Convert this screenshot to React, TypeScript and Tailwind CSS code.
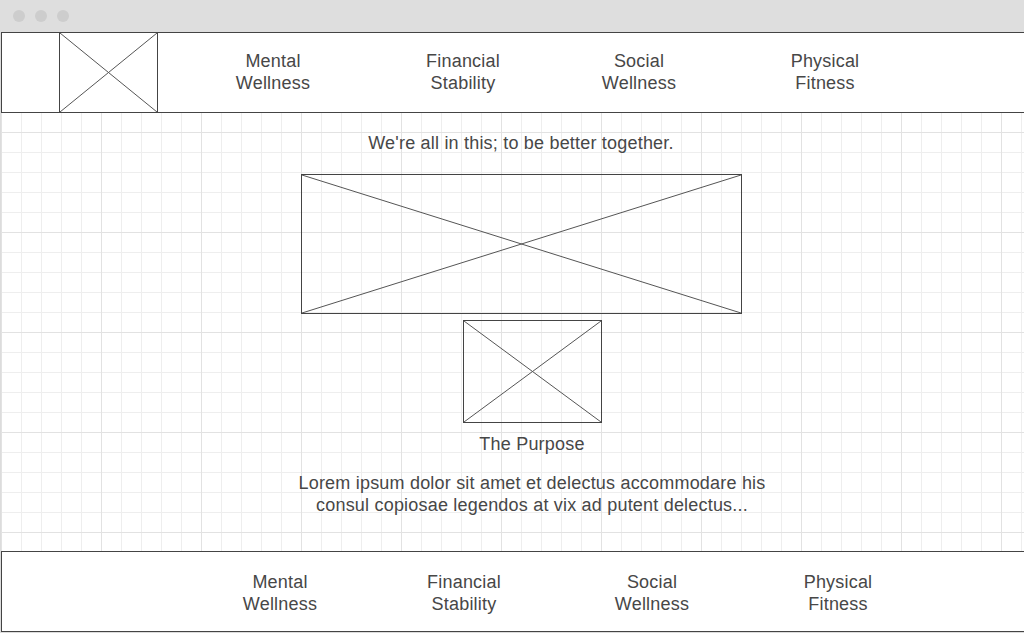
import React from "react";

const Cross = () => (
    <svg className="absolute inset-0 h-full w-full" viewBox="0 0 100 100" preserveAspectRatio="none">
        <line x1="0" y1="0" x2="100" y2="100" stroke="#555" strokeWidth="1" vectorEffect="non-scaling-stroke" />
        <line x1="100" y1="0" x2="0" y2="100" stroke="#555" strokeWidth="1" vectorEffect="non-scaling-stroke" />
    </svg>
);

const NavItem = ({top, bottom, className}: {top: string; bottom: string; className: string}) => (
    <div className={"w-[120px] shrink-0 text-center " + className}>
        <div>{top}</div>
        <div>{bottom}</div>
    </div>
);

const App = () => {
    return (
        <div className="h-[633px] w-[1024px] overflow-hidden bg-white font-['Liberation_Sans',Arial,sans-serif] text-[18px] leading-[22px] tracking-[0.2px] text-[#474747]">
            {/* window chrome */}
            <div className="flex h-[32px] items-center gap-[10px] bg-[#dedede] pl-[13px]">
                <span className="h-[12px] w-[12px] rounded-full bg-[#cdcdcd]" />
                <span className="h-[12px] w-[12px] rounded-full bg-[#cdcdcd]" />
                <span className="h-[12px] w-[12px] rounded-full bg-[#cdcdcd]" />
            </div>

            <div className="flex h-[601px] flex-col border-b border-l border-[#dcdcdc] bg-white bg-[linear-gradient(to_right,#e2e2e2_1px,transparent_1px),linear-gradient(to_bottom,#e2e2e2_1px,transparent_1px),linear-gradient(to_right,#eeeeee_1px,transparent_1px),linear-gradient(to_bottom,#eeeeee_1px,transparent_1px)] bg-[size:100px_100px,100px_100px,20px_20px,20px_20px]">
                {/* header */}
                <header className="flex h-[81px] shrink-0 items-center border-y border-l border-[#444] bg-white">
                    <div className="relative ml-[57px] h-full w-[99px] shrink-0 border-x border-[#444]">
                        <Cross />
                    </div>
                    <NavItem top="Mental" bottom="Wellness" className="mb-[2px] ml-[55px]" />
                    <NavItem top="Financial" bottom="Stability" className="mb-[2px] ml-[70px]" />
                    <NavItem top="Social" bottom="Wellness" className="mb-[2px] ml-[56px]" />
                    <NavItem top="Physical" bottom="Fitness" className="mb-[2px] ml-[66px]" />
                </header>

                {/* main */}
                <main className="flex h-[438px] shrink-0 flex-col items-start">
                    <p className="mt-[19px] w-full pl-[17px] text-center">We're all in this; to be better together.</p>
                    <div className="relative ml-[300px] mt-[20px] h-[140px] w-[441px] border border-[#444]">
                        <Cross />
                    </div>
                    <div className="relative ml-[462px] mt-[6px] h-[103px] w-[139px] border border-[#444]">
                        <Cross />
                    </div>
                    <p className="mt-[10px] w-full pl-[39px] text-center">The Purpose</p>
                    <p className="mt-[17px] w-full pl-[39px] text-center">
                        Lorem ipsum dolor sit amet et delectus accommodare his
                        <br />
                        consul copiosae legendos at vix ad putent delectus...
                    </p>
                </main>

                {/* footer */}
                <footer className="flex h-[81px] shrink-0 items-center border-y border-l border-[#444] bg-white pt-[2px]">
                    <NavItem top="Mental" bottom="Wellness" className="ml-[218px]" />
                    <NavItem top="Financial" bottom="Stability" className="ml-[64px]" />
                    <NavItem top="Social" bottom="Wellness" className="ml-[68px]" />
                    <NavItem top="Physical" bottom="Fitness" className="ml-[66px]" />
                </footer>
            </div>
        </div>
    );
};

export default App;
